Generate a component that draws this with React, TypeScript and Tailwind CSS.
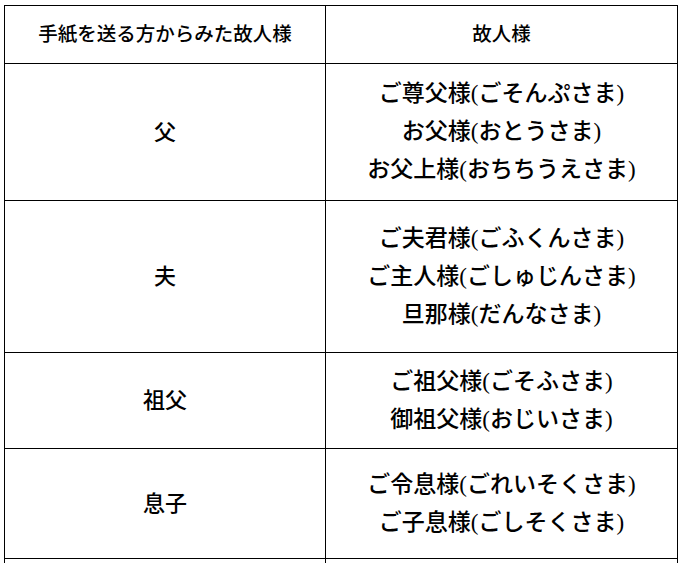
import React from "react";

// One table row per relation
interface Row {
  relation: string;
  names: string[];
  height: string;
}

const rows: Row[] = [
  {
    relation: "父",
    names: ["ご尊父様(ごそんぷさま)", "お父様(おとうさま)", "お父上様(おちちうえさま)"],
    height: "h-[137px]",
  },
  {
    relation: "夫",
    names: ["ご夫君様(ごふくんさま)", "ご主人様(ごしゅじんさま)", "旦那様(だんなさま)"],
    height: "h-[152px]",
  },
  {
    relation: "祖父",
    names: ["ご祖父様(ごそふさま)", "御祖父様(おじいさま)"],
    height: "h-[96px]",
  },
  {
    relation: "息子",
    names: ["ご令息様(ごれいそくさま)", "ご子息様(ごしそくさま)"],
    height: "h-[110px]",
  },
];

export default function App() {
  return (
    <div
      className="min-h-screen bg-white pl-[4px] pt-[5px] text-black"
      style={{ fontFamily: '"Liberation Serif", "Noto Sans CJK JP", serif' }}
    >
      <table className="w-[674px] border-collapse border border-black">
        <thead>
          <tr className="h-[58px]">
            <th className="w-[321px] border border-black text-[19.5px] font-medium">
              手紙を送る方からみた故人様
            </th>
            <th className="border border-black text-[19.5px] font-medium">故人様</th>
          </tr>
        </thead>
        <tbody>
          {rows.map((row) => (
            <tr key={row.relation} className={row.height}>
              <td className="border border-black text-center text-[22px] font-medium">
                {row.relation}
              </td>
              <td className="border border-black text-center text-[23px] font-medium leading-[38px]">
                {row.names.map((name) => (
                  <div key={name}>{name}</div>
                ))}
              </td>
            </tr>
          ))}
          <tr className="h-[110px]">
            <td className="border border-black"></td>
            <td className="border border-black"></td>
          </tr>
        </tbody>
      </table>
    </div>
  );
}
